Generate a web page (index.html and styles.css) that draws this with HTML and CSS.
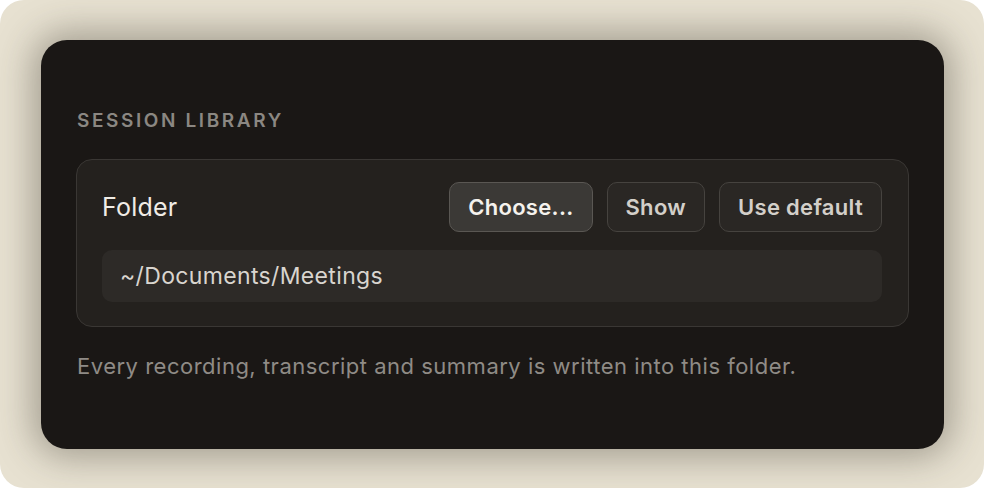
FILE: index.html
```html
<!DOCTYPE html>
<html>
<head>
<meta charset="utf-8">
<link rel="stylesheet" href="styles.css">
</head>
<body>
<div class="frame">
  <section class="card">
    <h2 class="heading">SESSION LIBRARY</h2>
    <div class="panel">
      <div class="row">
        <span class="label">Folder</span>
        <div class="buttons">
          <button class="btn btn-primary">Choose...</button>
          <button class="btn">Show</button>
          <button class="btn">Use default</button>
        </div>
      </div>
      <div class="path">~/Documents/Meetings</div>
    </div>
    <p class="note">Every recording, transcript and summary is written into this folder.</p>
  </section>
</div>
</body>
</html>
```
FILE: styles.css
```css
html, body {
  margin: 0;
  padding: 0;
  background: #ffffff;
}
body {
  font-family: Inter, "Noto Sans", "DejaVu Sans", sans-serif;
  width: 984px;
  height: 488px;
  overflow: hidden;
}
.frame {
  box-sizing: border-box;
  width: 984px;
  height: 488px;
  border-radius: 24px;
  background: #e7e1d1;
  padding: 40px 40px 39px 41px;
  display: flex;
}
.card {
  flex: 1;
  box-sizing: border-box;
  background: #1a1715;
  border-radius: 26px;
  padding: 69px 35px 0 35px;
  box-shadow: 0 0 36px 8px rgba(60, 55, 45, 0.4);
  display: flex;
  flex-direction: column;
}
.heading {
  margin: 0 0 26px 1px;
  font-size: 19px;
  line-height: 24px;
  font-weight: 600;
  letter-spacing: 2.6px;
  color: #8b8782;
}
.panel {
  background: #24211e;
  border: 1px solid #3a3734;
  border-radius: 16px;
  padding: 22px 26px 24px 25px;
  display: flex;
  flex-direction: column;
  gap: 18px;
}
.row {
  display: flex;
  align-items: center;
  justify-content: space-between;
}
.label {
  font-size: 25px;
  color: #f0ece6;
  letter-spacing: 0.2px;
}
.buttons {
  display: flex;
  gap: 14px;
}
.btn {
  font-family: inherit;
  height: 50px;
  box-sizing: border-box;
  padding: 0 18px;
  border-radius: 10px;
  background: #2a2724;
  border: 1px solid #46433f;
  color: #d3cfc9;
  font-size: 22px;
  font-weight: 600;
  letter-spacing: 0.3px;
}
.btn-primary {
  background: #3b3936;
  border-color: #5a5753;
  color: #f5f2ed;
}
.path {
  height: 52px;
  box-sizing: border-box;
  background: #2d2a27;
  border-radius: 10px;
  padding: 0 18px;
  display: flex;
  align-items: center;
  font-size: 23px;
  color: #d9d5cf;
  letter-spacing: 0.35px;
}
.note {
  margin: 25px 0 0 1px;
  font-size: 22px;
  line-height: 28px;
  color: #8f8b86;
  letter-spacing: 0.5px;
}
```
